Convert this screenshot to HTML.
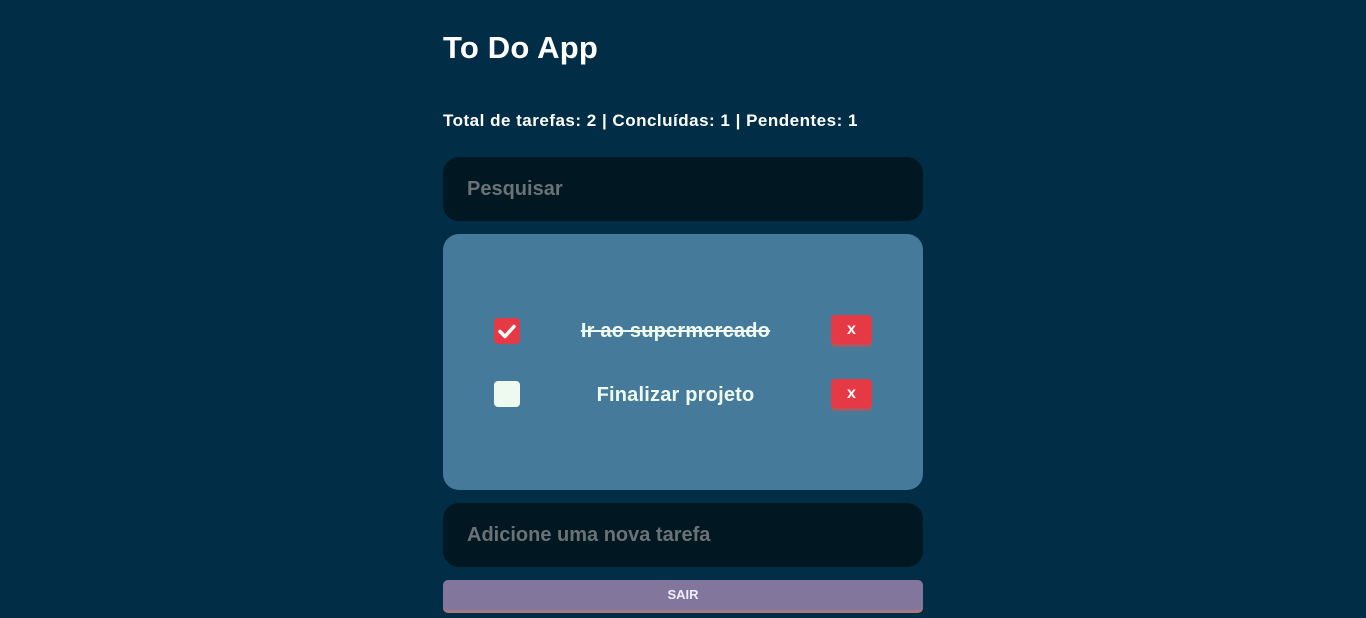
<!DOCTYPE html>
<html><head><style>
body{margin:0;background:#012e46;font-family:"Liberation Sans",sans-serif;color:#fff;width:1366px;height:618px;overflow:hidden;position:relative}
.a{position:absolute}
h1{position:absolute;left:443px;top:30px;margin:0;font-size:31px;font-weight:bold;letter-spacing:0.2px}
.stats{left:443px;top:111px;font-size:17px;font-weight:bold;letter-spacing:0.5px}
.inp{left:443px;width:480px;height:64px;background:#011722;border-radius:16px;box-sizing:border-box;padding-left:24px;line-height:64px;font-size:20px;font-weight:bold;color:#6b7276}
.list{left:443px;top:234px;width:480px;height:256px;background:#467a9b;border-radius:16px}
.cb{width:26px;height:26px;border-radius:4px;left:494px}
.txt{left:533px;width:285px;text-align:center;font-size:20px;font-weight:bold;color:#eefaf0;letter-spacing:0.2px}
.x{left:831px;width:41px;height:29px;background:#e63946;border-radius:4px;box-shadow:0 3px 0 #a85a63;text-align:center;line-height:29px;font-weight:bold;font-size:16px}
.sair{left:443px;top:580px;width:480px;height:30px;background:#83769c;border-radius:5px;box-shadow:0 3px 0 #a8787f;text-align:center;line-height:30px;font-size:13px;font-weight:bold;color:#eef}
</style></head><body>
<h1>To Do App</h1>
<div class="a stats">Total de tarefas: 2 | Concluídas: 1 | Pendentes: 1</div>
<div class="a inp" style="top:157px">Pesquisar</div>
<div class="a list"></div>
<div class="a cb" style="top:318px;background:#e63946"><svg width="26" height="26"><path d="M6 13.5l5 5 9-10" stroke="#fff" stroke-width="3.5" fill="none" stroke-linecap="round" stroke-linejoin="round"/></svg></div>
<div class="a txt" style="top:320px;text-decoration:line-through">Ir ao supermercado</div>
<div class="a x" style="top:315px">x</div>
<div class="a cb" style="top:381px;background:#eefaf0"></div>
<div class="a txt" style="top:384px">Finalizar projeto</div>
<div class="a x" style="top:379px">x</div>
<div class="a inp" style="top:503px">Adicione uma nova tarefa</div>
<div class="a sair">SAIR</div>
</body></html>
